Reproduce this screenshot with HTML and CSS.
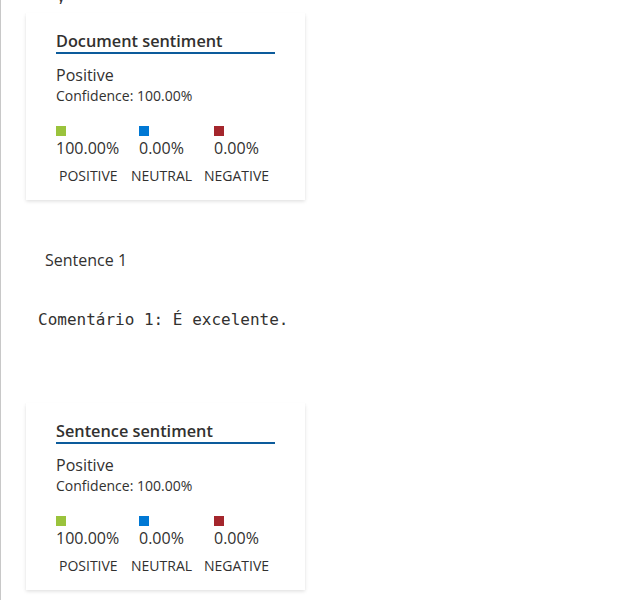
FILE: index.html
```html
<!DOCTYPE html>
<html>
<head>
<meta charset="utf-8">
<link rel="stylesheet" href="styles.css">
</head>
<body>
<div class="pane">
  <div class="cut">y</div>
  <div class="card">
    <div class="card-title">Document sentiment</div>
    <div class="label">Positive</div>
    <div class="conf">Confidence: 100.00%</div>
    <div class="scores">
      <div class="cell c1"><span class="sq green"></span><span class="pct">100.00%</span></div>
      <div class="cell c2"><span class="sq blue"></span><span class="pct">0.00%</span></div>
      <div class="cell c3"><span class="sq red"></span><span class="pct">0.00%</span></div>
      <div class="name n1">POSITIVE</div>
      <div class="name n2">NEUTRAL</div>
      <div class="name n3">NEGATIVE</div>
    </div>
  </div>
  <div class="sentence">Sentence 1</div>
  <div class="code">Comentário 1: É excelente.</div>
  <div class="card card2">
    <div class="card-title">Sentence sentiment</div>
    <div class="label">Positive</div>
    <div class="conf">Confidence: 100.00%</div>
    <div class="scores">
      <div class="cell c1"><span class="sq green"></span><span class="pct">100.00%</span></div>
      <div class="cell c2"><span class="sq blue"></span><span class="pct">0.00%</span></div>
      <div class="cell c3"><span class="sq red"></span><span class="pct">0.00%</span></div>
      <div class="name n1">POSITIVE</div>
      <div class="name n2">NEUTRAL</div>
      <div class="name n3">NEGATIVE</div>
    </div>
  </div>
</div>
</body>
</html>
```
FILE: styles.css
```css
html, body {
  margin: 0;
  padding: 0;
  background: #ffffff;
}
body {
  font-family: "Open Sans", "Noto Sans", sans-serif;
  color: #323130;
  overflow: hidden;
}
.pane {
  display: flow-root;
  border-left: 1px solid #c8c8c8;
  height: 600px;
  box-sizing: border-box;
  padding-left: 25px;
}
.cut {
  font-size: 16px;
  line-height: 16px;
  height: 16px;
  overflow: hidden;
  margin-left: 31px;
  margin-top: -12px;
  color: #323130;
}
.card {
  width: 279px;
  box-sizing: border-box;
  margin-top: 9px;
  padding: 17px 30px 14px 30px;
  background: #fff;
  box-shadow: 0 1.6px 3.6px rgba(0,0,0,0.13), 0 0.3px 0.9px rgba(0,0,0,0.11);
}
.card2 {
  margin-top: 72px;
}
.card-title {
  font-size: 16.3px;
  font-weight: 600;
  line-height: 22px;
  border-bottom: 2px solid #0c5b9b;
  color: #323130;
}
.label {
  font-size: 16px;
  line-height: 22px;
  margin-top: 10px;
}
.conf {
  font-size: 14px;
  line-height: 20px;
}
.scores {
  display: grid;
  grid-template-columns: 75px 73px 71px;
  margin-top: 20px;
}
.cell {
  display: flex;
  flex-direction: column;
  align-items: flex-start;
}
.c2 { padding-left: 8px; }
.c3 { padding-left: 10px; }
.sq {
  width: 10px;
  height: 10px;
  display: block;
}
.green { background: #9ac33c; }
.blue { background: #0078d4; }
.red { background: #a4262c; }
.pct {
  font-size: 16px;
  line-height: 24px;
}
.name {
  font-size: 14px;
  line-height: 20px;
  margin-top: 6px;
}
.n1 { padding-left: 3px; }
.sentence {
  font-size: 16px;
  line-height: 22px;
  margin-top: 49px;
  margin-left: 19px;
}
.code {
  font-family: "DejaVu Sans Mono", "Liberation Mono", monospace;
  font-size: 16px;
  line-height: 22px;
  margin-top: 38px;
  margin-left: 12px;
}
```
